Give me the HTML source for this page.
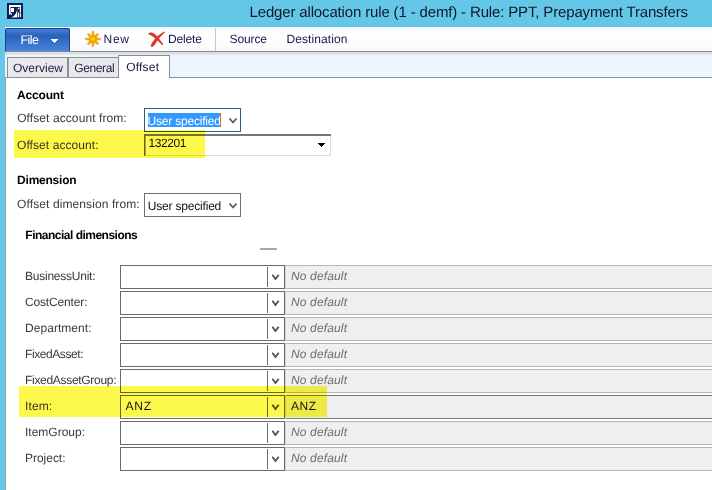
<!DOCTYPE html>
<html><head><meta charset="utf-8"><title>Ledger allocation rule</title>
<style>html,body{margin:0;padding:0;background:#64c7e7;overflow:hidden;width:712px;height:490px}svg{display:block}text{font-family:"Liberation Sans", sans-serif}</style>
</head><body><svg width="712" height="490" viewBox="0 0 712 490" font-family='"Liberation Sans", sans-serif' shape-rendering="crispEdges" text-rendering="geometricPrecision"><rect x="0" y="0" width="712" height="490" fill="#64c7e7" /><rect x="5" y="27" width="707" height="463" fill="#ffffff" /><defs><linearGradient id="tb" x1="0" y1="0" x2="0" y2="1"><stop offset="0" stop-color="#f4f8fc"/><stop offset="0.3" stop-color="#ffffff"/><stop offset="1" stop-color="#f8fafd"/></linearGradient><linearGradient id="fb" x1="0" y1="0" x2="0" y2="1"><stop offset="0" stop-color="#4384d8"/><stop offset="0.35" stop-color="#2c62b9"/><stop offset="1" stop-color="#4585dc"/></linearGradient><linearGradient id="ts" x1="0" y1="0" x2="0" y2="1"><stop offset="0" stop-color="#d8dce1"/><stop offset="1" stop-color="#e2e6ea"/></linearGradient></defs><rect x="5" y="27" width="707" height="24" fill="url(#tb)" /><rect x="5" y="51" width="707" height="1" fill="#868a92" /><rect x="5" y="52" width="707" height="3" fill="url(#ts)" /><rect x="5" y="55" width="707" height="22" fill="#edf6fe" /><rect x="5" y="77" width="707" height="1" fill="#8a8e96" /><rect x="5" y="77" width="1" height="413" fill="#9a9a9a" /><path d="M5 51 V30 Q5 28 7 28 H68 Q70 28 70 30 V51 Z" fill="url(#fb)" shape-rendering="geometricPrecision"/><path d="M5.5 51 V30 Q5.5 28.5 7 28.5 H68 Q69.5 28.5 69.5 30 V51" fill="none" stroke="#1c3f94" shape-rendering="geometricPrecision"/><text x="20.5" y="44" font-size="12.5" fill="#ffffff" font-weight="normal" font-style="normal" textLength="18.5" lengthAdjust="spacing">File</text><path d="M51 39 L58 39 L54.5 43 Z" fill="#ffffff"/><rect x="215" y="28" width="1" height="23" fill="#c4c8ce" /><defs><radialGradient id="sg" cx="0.5" cy="0.5" r="0.5"><stop offset="0" stop-color="#ffe870"/><stop offset="0.6" stop-color="#ffc000"/><stop offset="1" stop-color="#f2a400"/></radialGradient></defs><g transform="translate(93,39)" shape-rendering="geometricPrecision" stroke="#e08a00" stroke-width="0.45" stroke-linejoin="round"><path transform="rotate(45) scale(0.95)" d="M-0.6 -7.8 L0.6 -7.8 L1.6 -1.6 L7.8 -0.6 L7.8 0.6 L1.6 1.6 L0.6 7.8 L-0.6 7.8 L-1.6 1.6 L-7.8 0.6 L-7.8 -0.6 L-1.6 -1.6 Z" fill="#f5aa00"/><path d="M-0.6 -7.8 L0.6 -7.8 L1.6 -1.6 L7.8 -0.6 L7.8 0.6 L1.6 1.6 L0.6 7.8 L-0.6 7.8 L-1.6 1.6 L-7.8 0.6 L-7.8 -0.6 L-1.6 -1.6 Z" fill="#f7ae00"/><circle r="2.6" fill="url(#sg)" stroke="none"/></g><text x="103.5" y="43" font-size="12" fill="#18184a" font-weight="normal" font-style="normal" textLength="25.5" lengthAdjust="spacing">New</text><g shape-rendering="geometricPrecision" fill="#e2382a" stroke="#c8281c" stroke-width="0.6" stroke-linejoin="round"><path d="M148.5 33.8 C150.5 31.8 154 33 157 36.5 L163 44.2 L162.3 44.8 L155.8 38.6 C153.2 36.3 150.8 35.2 148.5 33.8 Z"/><path d="M164.8 32 C160.5 33.3 156.8 36.8 153.8 40.8 C151.8 43.3 150.6 45.6 151.4 46.5 C152.3 47.2 153.8 45.8 155.4 43.3 C158 39.3 160.8 35.5 164.8 32 Z"/></g><text x="168.0" y="43" font-size="12" fill="#18184a" font-weight="normal" font-style="normal" textLength="34.0" lengthAdjust="spacing">Delete</text><text x="229.5" y="43" font-size="12" fill="#18184a" font-weight="normal" font-style="normal" textLength="37.5" lengthAdjust="spacing">Source</text><text x="286.5" y="43" font-size="12" fill="#18184a" font-weight="normal" font-style="normal" textLength="61.0" lengthAdjust="spacing">Destination</text><text x="249.5" y="17" font-size="15" fill="#101828" font-weight="normal" font-style="normal" textLength="438.5" lengthAdjust="spacing">Ledger allocation rule (1 - demf) - Rule: PPT, Prepayment Transfers</text><g shape-rendering="geometricPrecision"><rect x="7" y="3" width="16" height="16" fill="#0b1d55"/><path d="M9 5 H21 V12.5 H19.8 V7 H10.6 V13.2 H12 V14.6 H9 Z" fill="#ffffff"/><rect x="11" y="8" width="3" height="4" fill="#ffffff"/><path d="M10.2 17.6 C14.2 16.8 16.6 13.5 17.2 8.4 L17.4 17.6 Z" fill="#ffffff"/><circle cx="18.5" cy="8.5" r="0.8" fill="#ffffff"/><rect x="18" y="12.5" width="1.2" height="4.8" fill="#ffffff"/><rect x="20" y="13.2" width="1" height="4" fill="#ffffff"/></g><rect x="7" y="57" width="61" height="20" fill="#e9e9e9" stroke="none"/><path d="M7.5 77 V57.5 H67.5 V77" fill="none" stroke="#8a8e96"/><rect x="68" y="57" width="50" height="20" fill="#e9e9e9" /><path d="M68.5 77 V57.5 H118" fill="none" stroke="#8a8e96"/><rect x="118" y="55" width="52" height="23" fill="#ffffff" /><path d="M118.5 78 V55.5 H169.5 V78" fill="none" stroke="#8a8e96"/><text x="13.0" y="72" font-size="12" fill="#18184a" font-weight="normal" font-style="normal" textLength="50.0" lengthAdjust="spacing">Overview</text><text x="74.2" y="72" font-size="12" fill="#18184a" font-weight="normal" font-style="normal" textLength="40.5" lengthAdjust="spacing">General</text><text x="126.2" y="71" font-size="12" fill="#18184a" font-weight="normal" font-style="normal" textLength="32.8" lengthAdjust="spacing">Offset</text><text x="16.9" y="99" font-size="12" fill="#000000" font-weight="bold" font-style="normal" textLength="47.1" lengthAdjust="spacing">Account</text><text x="17.2" y="122" font-size="12" fill="#3d3545" font-weight="normal" font-style="normal" textLength="109.5" lengthAdjust="spacing">Offset account from:</text><text x="17.0" y="149" font-size="12" fill="#3d3545" font-weight="normal" font-style="normal" textLength="81.5" lengthAdjust="spacing">Offset account:</text><rect x="144.5" y="108.5" width="96" height="23" fill="#ffffff" stroke="#2a5a9a"/><rect x="148" y="113" width="73" height="14" fill="#3399ff" /><text x="147.5" y="124.6" font-size="12" fill="#ffffff" font-weight="normal" font-style="normal" textLength="73.5" lengthAdjust="spacing">User specified</text><rect x="220" y="113" width="1" height="14" fill="#e07020" /><path d="M229.5 118.5 L233 122.5 L236.5 118.5" fill="none" stroke="#5a5a5a" stroke-width="1.8" shape-rendering="geometricPrecision"/><rect x="144" y="134" width="187" height="22" fill="none"/><rect x="144" y="134" width="187" height="2" fill="#777777" /><rect x="144" y="134" width="1" height="22" fill="#666666" /><rect x="145" y="136" width="1" height="19" fill="#a8a8a8" /><rect x="330" y="136" width="1" height="20" fill="#dddddd" /><rect x="145" y="155" width="186" height="1" fill="#dddddd" /><text x="148.5" y="146.5" font-size="12" fill="#111111" font-weight="normal" font-style="normal" textLength="38.0" lengthAdjust="spacing">132201</text><path d="M318 143 H325 L321.5 147 Z" fill="#000000"/><text x="17.1" y="184" font-size="12" fill="#000000" font-weight="bold" font-style="normal" textLength="59.5" lengthAdjust="spacing">Dimension</text><text x="17.1" y="208" font-size="12" fill="#3d3545" font-weight="normal" font-style="normal" textLength="122.5" lengthAdjust="spacing">Offset dimension from:</text><rect x="144.5" y="193.5" width="96" height="23" fill="#ffffff" stroke="#707070"/><text x="147.8" y="209.6" font-size="12" fill="#111111" font-weight="normal" font-style="normal" textLength="73.5" lengthAdjust="spacing">User specified</text><path d="M229.5 203.5 L233 207.5 L236.5 203.5" fill="none" stroke="#5a5a5a" stroke-width="1.8" shape-rendering="geometricPrecision"/><text x="25.3" y="239" font-size="12" fill="#000000" font-weight="bold" font-style="normal" textLength="112.5" lengthAdjust="spacing">Financial dimensions</text><rect x="260" y="248" width="17" height="2" fill="#a8a8a8" /><rect x="285" y="265" width="427" height="24" fill="#efefef" /><rect x="285" y="265" width="427" height="1" fill="#b2b6ba" /><rect x="285" y="288" width="427" height="1" fill="#b2b6ba" /><rect x="285" y="265" width="1" height="24" fill="#d4d4d4" /><rect x="120.5" y="265.5" width="164" height="23" fill="#ffffff" stroke="#6a6a6a"/><rect x="267" y="267" width="1" height="20" fill="#6a6a6a" /><path d="M272.3 274.8 L275.5 279 L278.7 274.8" fill="none" stroke="#4e4e4e" stroke-width="1.8" stroke-linecap="butt" shape-rendering="geometricPrecision"/><text x="291" y="280" font-size="12" fill="#6d6d6d" font-weight="normal" font-style="italic" textLength="56" lengthAdjust="spacing">No default</text><text x="25.0" y="280" font-size="12" fill="#3d3545" font-weight="normal" font-style="normal" textLength="70.5" lengthAdjust="spacing">BusinessUnit:</text><rect x="285" y="291" width="427" height="24" fill="#efefef" /><rect x="285" y="291" width="427" height="1" fill="#b2b6ba" /><rect x="285" y="314" width="427" height="1" fill="#b2b6ba" /><rect x="285" y="291" width="1" height="24" fill="#d4d4d4" /><rect x="120.5" y="291.5" width="164" height="23" fill="#ffffff" stroke="#6a6a6a"/><rect x="267" y="293" width="1" height="20" fill="#6a6a6a" /><path d="M272.3 300.8 L275.5 305 L278.7 300.8" fill="none" stroke="#4e4e4e" stroke-width="1.8" stroke-linecap="butt" shape-rendering="geometricPrecision"/><text x="291" y="306" font-size="12" fill="#6d6d6d" font-weight="normal" font-style="italic" textLength="56" lengthAdjust="spacing">No default</text><text x="25.0" y="306" font-size="12" fill="#3d3545" font-weight="normal" font-style="normal" textLength="62.5" lengthAdjust="spacing">CostCenter:</text><rect x="285" y="317" width="427" height="24" fill="#efefef" /><rect x="285" y="317" width="427" height="1" fill="#b2b6ba" /><rect x="285" y="340" width="427" height="1" fill="#b2b6ba" /><rect x="285" y="317" width="1" height="24" fill="#d4d4d4" /><rect x="120.5" y="317.5" width="164" height="23" fill="#ffffff" stroke="#6a6a6a"/><rect x="267" y="319" width="1" height="20" fill="#6a6a6a" /><path d="M272.3 326.8 L275.5 331 L278.7 326.8" fill="none" stroke="#4e4e4e" stroke-width="1.8" stroke-linecap="butt" shape-rendering="geometricPrecision"/><text x="291" y="332" font-size="12" fill="#6d6d6d" font-weight="normal" font-style="italic" textLength="56" lengthAdjust="spacing">No default</text><text x="25.0" y="332" font-size="12" fill="#3d3545" font-weight="normal" font-style="normal" textLength="66.5" lengthAdjust="spacing">Department:</text><rect x="285" y="343" width="427" height="24" fill="#efefef" /><rect x="285" y="343" width="427" height="1" fill="#b2b6ba" /><rect x="285" y="366" width="427" height="1" fill="#b2b6ba" /><rect x="285" y="343" width="1" height="24" fill="#d4d4d4" /><rect x="120.5" y="343.5" width="164" height="23" fill="#ffffff" stroke="#6a6a6a"/><rect x="267" y="345" width="1" height="20" fill="#6a6a6a" /><path d="M272.3 352.8 L275.5 357 L278.7 352.8" fill="none" stroke="#4e4e4e" stroke-width="1.8" stroke-linecap="butt" shape-rendering="geometricPrecision"/><text x="291" y="358" font-size="12" fill="#6d6d6d" font-weight="normal" font-style="italic" textLength="56" lengthAdjust="spacing">No default</text><text x="25.0" y="358" font-size="12" fill="#3d3545" font-weight="normal" font-style="normal" textLength="58.5" lengthAdjust="spacing">FixedAsset:</text><rect x="285" y="369" width="427" height="24" fill="#efefef" /><rect x="285" y="369" width="427" height="1" fill="#b2b6ba" /><rect x="285" y="392" width="427" height="1" fill="#b2b6ba" /><rect x="285" y="369" width="1" height="24" fill="#d4d4d4" /><rect x="120.5" y="369.5" width="164" height="23" fill="#ffffff" stroke="#6a6a6a"/><rect x="267" y="371" width="1" height="20" fill="#6a6a6a" /><path d="M272.3 378.8 L275.5 383 L278.7 378.8" fill="none" stroke="#4e4e4e" stroke-width="1.8" stroke-linecap="butt" shape-rendering="geometricPrecision"/><text x="291" y="384" font-size="12" fill="#6d6d6d" font-weight="normal" font-style="italic" textLength="56" lengthAdjust="spacing">No default</text><text x="25.0" y="384" font-size="12" fill="#3d3545" font-weight="normal" font-style="normal" textLength="91.5" lengthAdjust="spacing">FixedAssetGroup:</text><rect x="285" y="395" width="427" height="24" fill="#efefef" /><rect x="285" y="395" width="427" height="1" fill="#7a7e84" /><rect x="285" y="418" width="427" height="1" fill="#7a7e84" /><rect x="285" y="395" width="1" height="24" fill="#d4d4d4" /><rect x="120.5" y="395.5" width="164" height="23" fill="#ffffff" stroke="#6a6a6a"/><rect x="267" y="397" width="1" height="20" fill="#6a6a6a" /><path d="M272.3 404.8 L275.5 409 L278.7 404.8" fill="none" stroke="#4e4e4e" stroke-width="1.8" stroke-linecap="butt" shape-rendering="geometricPrecision"/><text x="25.0" y="410" font-size="12" fill="#3d3545" font-weight="normal" font-style="normal" textLength="27.1" lengthAdjust="spacing">Item:</text><rect x="285" y="421" width="427" height="24" fill="#efefef" /><rect x="285" y="421" width="427" height="1" fill="#b2b6ba" /><rect x="285" y="444" width="427" height="1" fill="#b2b6ba" /><rect x="285" y="421" width="1" height="24" fill="#d4d4d4" /><rect x="120.5" y="421.5" width="164" height="23" fill="#ffffff" stroke="#6a6a6a"/><rect x="267" y="423" width="1" height="20" fill="#6a6a6a" /><path d="M272.3 430.8 L275.5 435 L278.7 430.8" fill="none" stroke="#4e4e4e" stroke-width="1.8" stroke-linecap="butt" shape-rendering="geometricPrecision"/><text x="291" y="436" font-size="12" fill="#6d6d6d" font-weight="normal" font-style="italic" textLength="56" lengthAdjust="spacing">No default</text><text x="25.0" y="436" font-size="12" fill="#3d3545" font-weight="normal" font-style="normal" textLength="60.0" lengthAdjust="spacing">ItemGroup:</text><rect x="285" y="447" width="427" height="24" fill="#efefef" /><rect x="285" y="447" width="427" height="1" fill="#b2b6ba" /><rect x="285" y="470" width="427" height="1" fill="#b2b6ba" /><rect x="285" y="447" width="1" height="24" fill="#d4d4d4" /><rect x="120.5" y="447.5" width="164" height="23" fill="#ffffff" stroke="#6a6a6a"/><rect x="267" y="449" width="1" height="20" fill="#6a6a6a" /><path d="M272.3 456.8 L275.5 461 L278.7 456.8" fill="none" stroke="#4e4e4e" stroke-width="1.8" stroke-linecap="butt" shape-rendering="geometricPrecision"/><text x="291" y="462" font-size="12" fill="#6d6d6d" font-weight="normal" font-style="italic" textLength="56" lengthAdjust="spacing">No default</text><text x="25.0" y="462" font-size="12" fill="#3d3545" font-weight="normal" font-style="normal" textLength="40.5" lengthAdjust="spacing">Project:</text><rect x="14" y="130" width="191" height="28" fill="#fdf94c" style="mix-blend-mode:multiply"/><rect x="19" y="386" width="308" height="31" fill="#fdf94c" style="mix-blend-mode:multiply"/><text x="125.5" y="410" font-size="12" fill="#111111" font-weight="normal" font-style="normal" textLength="25.5" lengthAdjust="spacing">ANZ</text><text x="291.0" y="410" font-size="12" fill="#111111" font-weight="normal" font-style="normal" textLength="25.0" lengthAdjust="spacing">ANZ</text></svg></body></html>
